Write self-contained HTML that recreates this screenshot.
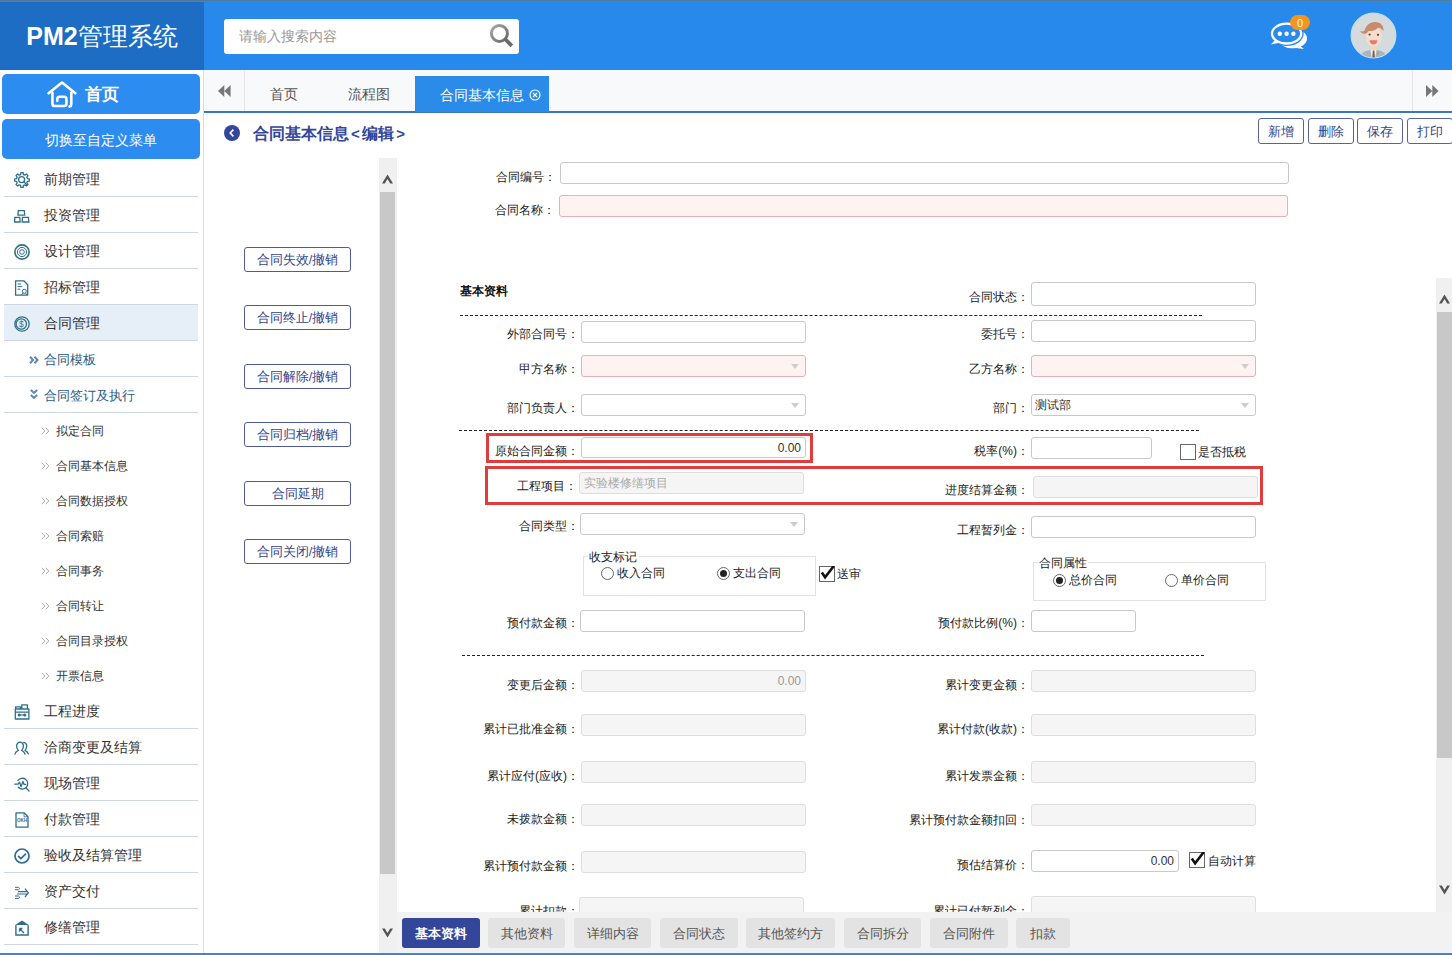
<!DOCTYPE html>
<html><head><meta charset="utf-8">
<style>
*{margin:0;padding:0;box-sizing:border-box}
html,body{width:1452px;height:955px;overflow:hidden;background:#fff;font-family:"Liberation Sans",sans-serif;color:#333}
.a{position:absolute}
#hdr{left:0;top:0;width:1452px;height:70px;background:#2889ec}
#hdrline{left:0;top:0;width:1452px;height:2px;background:linear-gradient(#4f7590,#4a86c0)}
#logo{left:0;top:2px;width:204px;height:68px;background:#1d6dc4;color:#fff;font-size:25px;line-height:68px;text-align:center;white-space:nowrap}
#search{left:224px;top:19px;width:295px;height:35px;background:#fff;border-radius:3px}
#search span{position:absolute;left:15px;top:0;line-height:35px;font-size:14px;color:#999}
#side{left:0;top:70px;width:204px;height:885px;background:#fff;border-right:1px solid #d8dde3}
.sbtn{position:absolute;left:2px;width:198px;background:#2d8cf0;border-radius:5px;color:#fff;text-align:center}
.mi{position:absolute;left:4px;width:194px;height:36px;border-bottom:1px solid #ccd7e1;font-size:14px;color:#333;line-height:36px}
.mi .t{position:absolute;left:40px;top:0}
.mi svg{position:absolute;left:10px;top:11px}
.si{position:absolute;left:0;width:200px;height:35px;font-size:12px;color:#333;line-height:35px}
.si .t{position:absolute;left:56px;top:1px}
.si .r{position:absolute;left:41px;top:14px}
#tabbar{left:204px;top:70px;width:1248px;height:41px;background:#f7f9fa}
#tabline{left:204px;top:111px;width:1248px;height:2px;background:#3b76c0}
.tab{position:absolute;top:0;height:41px;line-height:49px;font-size:14px;color:#555}
.obtn{position:absolute;height:26px;border:1px solid #56649a;border-radius:3px;background:#fff;color:#34448a;font-size:12.5px;text-align:center;line-height:26px}
.lbtn{position:absolute;left:244px;width:107px;height:25px;border:1px solid #4f5b98;border-radius:3px;background:#fff;color:#34448a;font-size:12.5px;text-align:center;line-height:24px}
.lbl{position:absolute;font-size:12px;color:#222;text-align:right;white-space:nowrap}
.inp{position:absolute;height:22px;border:1px solid #c9c9c9;border-radius:3px;background:#fff}
.inp.req{border-color:#e8b0b0;background:#fff2f2}
.inp.dis{background:#f5f5f5;border-color:#dedede}
.dd:after{content:"";position:absolute;right:6px;top:8px;border-left:4.5px solid transparent;border-right:4.5px solid transparent;border-top:5px solid #cdcdcd}
.dash{position:absolute;height:0;border-top:1px dashed #222}
.btab{position:absolute;top:918px;height:30px;background:#e3e3e3;border-radius:3px;color:#555;font-size:12.5px;text-align:center;line-height:32px}
.v{position:absolute;top:0;font-size:12px;line-height:20px;color:#333}
.cb{position:absolute;width:16px;height:16px;border:1px solid #666;background:#fff}

.rd{position:absolute;width:13px;height:13px;border:1px solid #666;border-radius:50%;background:#fff}
.rd.on:after{content:"";position:absolute;left:2px;top:2px;width:7px;height:7px;border-radius:50%;background:#222}
.fs{border:1px solid #e2e2e2}
</style></head><body>
<div id="hdr" class="a"></div>
<div id="hdrline" class="a"></div>
<div class="a" style="left:204px;top:70px;width:1248px;height:1px;background:#4a7ab0"></div>
<div id="logo" class="a"><b>PM2</b>管理系统</div>
<div id="search" class="a"><span>请输入搜索内容</span></div>

<!--HDRICONS-->
<svg class="a" style="left:488px;top:22px" width="28" height="28" viewBox="0 0 28 28"><defs><linearGradient id="mg" x1="0" y1="0" x2="1" y2="1"><stop offset="0" stop-color="#a8a8a8"/><stop offset="1" stop-color="#666"/></linearGradient></defs><circle cx="11.4" cy="11.4" r="8" fill="none" stroke="url(#mg)" stroke-width="3"/><path d="M17 17l6.8 6.8" stroke="#6a6a6a" stroke-width="3.8"/></svg>
<svg class="a" style="left:1266px;top:12px" width="48" height="42" viewBox="0 0 48 42"><ellipse cx="26.5" cy="26.5" rx="14.5" ry="9.8" fill="#fff"/><path d="M33 33l5 4-8-1z" fill="#fff"/><ellipse cx="20.6" cy="21.6" rx="14.6" ry="9.9" fill="#2b8be9" stroke="#2b8be9" stroke-width="5"/><ellipse cx="20.6" cy="21.6" rx="14.6" ry="9.9" fill="#2b8be9" stroke="#fff" stroke-width="2.3"/><path d="M8.5 28.5l-3.5 4 8.5-1.8z" fill="#fff"/><circle cx="13.8" cy="21.8" r="2.2" fill="#fff"/><circle cx="20.6" cy="21.8" r="2.2" fill="#fff"/><circle cx="27.4" cy="21.8" r="2.2" fill="#fff"/><rect x="24" y="3" width="20" height="15" rx="7.5" fill="#f7941d"/><text x="34" y="14.5" font-size="11" font-family="Liberation Sans" fill="#fff" text-anchor="middle">0</text></svg>
<svg class="a" style="left:1350px;top:12px" width="47" height="47" viewBox="0 0 47 47"><defs><clipPath id="cc"><circle cx="23.5" cy="23.5" r="22"/></clipPath></defs><circle cx="23.5" cy="23.5" r="22.3" fill="#d5dadc" stroke="#bfe0f6" stroke-width="1.2"/><g clip-path="url(#cc)"><path d="M10 47c0-6 5-9 13.5-9S37 41 37 47z" fill="#aab5ba"/><path d="M20.5 37.5h6l-1.5 10h-3z" fill="#f4f1ea"/><path d="M22.8 38.5h1.6l.6 9h-2.8z" fill="#7d5a48"/><path d="M27 39l3 2-3 3z" fill="#8fb59a"/><rect x="20.5" y="31" width="6" height="7" fill="#f3d3c2"/><ellipse cx="23.8" cy="25" rx="8" ry="9.8" fill="#f6dccd"/><path d="M14.5 21c0-7 5-11 10.5-11 6 0 9 4 8.5 9-1-1.5-3-3-5.5-3.5-1.5 2-4 3.5-7 3.5-2.5 0-4 .5-5 2z" fill="#c98a6c"/><path d="M17 17c-2 2-4.5 3-7 2 1.5 3 5 3.5 7.5 1.5z" fill="#c98a6c"/><circle cx="19.6" cy="22.5" r="1.1" fill="#5a4036"/><circle cx="28" cy="22.8" r="1.1" fill="#5a4036"/><path d="M19.5 28.3h8c-.5 3-2 4.3-4 4.3s-3.5-1.3-4-4.3z" fill="#e27c68"/></g></svg>
<!--/HDRICONS-->
<div id="side" class="a"></div>
<div class="sbtn" style="top:74px;height:40px;font-size:17px;line-height:40px;text-align:left"><span style="position:absolute;left:83px;top:1px;font-weight:bold">首页</span></div>
<div class="sbtn" style="top:119px;height:40px;font-size:14px;line-height:42px">切换至自定义菜单</div>
<svg class="a" style="left:47px;top:81px" width="30" height="27" viewBox="0 0 30 27"><g fill="none" stroke="#fff" stroke-width="2.6" stroke-linecap="round" stroke-linejoin="round"><path d="M1.6 12.3L15 1.6 28.4 12.3"/><path d="M5.4 11.8V22.4Q5.4 25 8 25H17.2Q19.4 25 19.4 22.8V18Q19.4 15.8 17.2 15.8H12.4Q10.3 15.8 10.3 18V20"/><path d="M24.3 11.8V23.2Q24.3 25 22.6 25.6"/></g></svg>


<!--SIDE-->
<div class="mi" style="top:161px;"><svg width="16" height="16" viewBox="0 0 16 16"><g fill="none" stroke="#2f6f8c" stroke-width="1.3" stroke-linejoin="round"><path d="M6.61 2.58 L6.84 0.69 L9.16 0.69 L9.39 2.58 L10.85 3.18 L12.35 2.01 L13.99 3.65 L12.82 5.15 L13.42 6.61 L15.31 6.84 L15.31 9.16 L13.42 9.39 L12.82 10.85 L13.99 12.35 L12.35 13.99 L10.85 12.82 L9.39 13.42 L9.16 15.31 L6.84 15.31 L6.61 13.42 L5.15 12.82 L3.65 13.99 L2.01 12.35 L3.18 10.85 L2.58 9.39 L0.69 9.16 L0.69 6.84 L2.58 6.61 L3.18 5.15 L2.01 3.65 L3.65 2.01 L5.15 3.18Z"/><circle cx="7.6" cy="7.6" r="3"/><path d="M9.8 9.8l3.6 3.6"/></g></svg><span class="t">前期管理</span></div>
<div class="mi" style="top:197px;"><svg width="16" height="16" viewBox="0 0 16 16"><g fill="none" stroke="#2f6f8c" stroke-width="1.3"><path d="M4.3 2.6h6l.4 4.6H3.9z"/><path d="M.8 9.4h5l.3 4.6H.6z"/><path d="M8.4 9.4h6l.4 4.6H8.2z"/></g></svg><span class="t">投资管理</span></div>
<div class="mi" style="top:233px;"><svg width="16" height="16" viewBox="0 0 16 16"><g fill="none" stroke="#2f6f8c"><circle cx="8" cy="8" r="7.1" stroke-width="1.6"/><circle cx="8" cy="8" r="4.6" stroke-width="1"/><circle cx="8" cy="8" r="2.3" stroke-width="1"/></g></svg><span class="t">设计管理</span></div>
<div class="mi" style="top:269px;"><svg width="16" height="16" viewBox="0 0 16 16"><g fill="none" stroke="#2f6f8c" stroke-width="1.3" stroke-linejoin="round"><path d="M1.6 .8h8.2l3.9 3.9v10.5H1.6z"/><path d="M3.6 4h3.6M3.6 6.6h4.6M3.6 9.2h2.6" stroke-width="1"/><circle cx="10.3" cy="11.3" r="2" stroke-width="1"/><path d="M9 13l-1.5 2M11.6 13l1.5 2" stroke-width="1"/></g></svg><span class="t">招标管理</span></div>
<div class="mi" style="top:305px;background:#e6eef7;"><svg width="16" height="16" viewBox="0 0 16 16"><g fill="none" stroke="#2f6f8c" stroke-width="1.3"><circle cx="8" cy="8" r="7.2"/><circle cx="7.3" cy="8" r="5.2"/></g><text x="7.3" y="11.2" font-size="8.5" font-family="Liberation Sans" text-anchor="middle" fill="#2f6f8c">$</text></svg><span class="t">合同管理</span></div>
<div class="mi" style="top:341px;color:#2c5a86"><svg style="position:absolute;left:25px;top:15px" width="10" height="8" viewBox="0 0 10 8"><path d="M1 .8L4 4 1 7.2M5.5 .8L8.5 4 5.5 7.2" fill="none" stroke="#5b87b5" stroke-width="2"/></svg><span class="t" style="left:40px;font-size:13px;top:1px">合同模板</span></div>
<div class="mi" style="top:377px;color:#2c5a86"><svg style="position:absolute;left:26px;top:12px" width="8" height="11" viewBox="0 0 8 11"><path d="M.8 1L4 4l3.2-3M.8 6L4 9l3.2-3" fill="none" stroke="#5b87b5" stroke-width="2"/></svg><span class="t" style="left:40px;font-size:13px;top:1px">合同签订及执行</span></div>
<div class="si" style="top:413px"><svg class="r" width="9" height="8" viewBox="0 0 9 8"><path d="M.8 .8L3.8 4 .8 7.2M4.8 .8L7.8 4 4.8 7.2" fill="none" stroke="#aaa" stroke-width="1"/></svg><span class="t">拟定合同</span></div>
<div class="si" style="top:448px"><svg class="r" width="9" height="8" viewBox="0 0 9 8"><path d="M.8 .8L3.8 4 .8 7.2M4.8 .8L7.8 4 4.8 7.2" fill="none" stroke="#aaa" stroke-width="1"/></svg><span class="t">合同基本信息</span></div>
<div class="si" style="top:483px"><svg class="r" width="9" height="8" viewBox="0 0 9 8"><path d="M.8 .8L3.8 4 .8 7.2M4.8 .8L7.8 4 4.8 7.2" fill="none" stroke="#aaa" stroke-width="1"/></svg><span class="t">合同数据授权</span></div>
<div class="si" style="top:518px"><svg class="r" width="9" height="8" viewBox="0 0 9 8"><path d="M.8 .8L3.8 4 .8 7.2M4.8 .8L7.8 4 4.8 7.2" fill="none" stroke="#aaa" stroke-width="1"/></svg><span class="t">合同索赔</span></div>
<div class="si" style="top:553px"><svg class="r" width="9" height="8" viewBox="0 0 9 8"><path d="M.8 .8L3.8 4 .8 7.2M4.8 .8L7.8 4 4.8 7.2" fill="none" stroke="#aaa" stroke-width="1"/></svg><span class="t">合同事务</span></div>
<div class="si" style="top:588px"><svg class="r" width="9" height="8" viewBox="0 0 9 8"><path d="M.8 .8L3.8 4 .8 7.2M4.8 .8L7.8 4 4.8 7.2" fill="none" stroke="#aaa" stroke-width="1"/></svg><span class="t">合同转让</span></div>
<div class="si" style="top:623px"><svg class="r" width="9" height="8" viewBox="0 0 9 8"><path d="M.8 .8L3.8 4 .8 7.2M4.8 .8L7.8 4 4.8 7.2" fill="none" stroke="#aaa" stroke-width="1"/></svg><span class="t">合同目录授权</span></div>
<div class="si" style="top:658px"><svg class="r" width="9" height="8" viewBox="0 0 9 8"><path d="M.8 .8L3.8 4 .8 7.2M4.8 .8L7.8 4 4.8 7.2" fill="none" stroke="#aaa" stroke-width="1"/></svg><span class="t">开票信息</span></div>
<div class="mi" style="top:693px;"><svg width="16" height="16" viewBox="0 0 16 16"><g fill="none" stroke="#2f6f8c" stroke-width="1.3" stroke-linejoin="round"><rect x="1.3" y="5" width="13.6" height="10"/><path d="M1.3 8.2h13.6M1.6 5V2.8h5V5M7.8 5V.9h5.6V5"/><path d="M5 11h6" stroke-width="1.1"/><circle cx="5.2" cy="11" r=".9" fill="#2f6f8c"/><circle cx="10.8" cy="11" r=".9" fill="#2f6f8c"/></g></svg><span class="t">工程进度</span></div>
<div class="mi" style="top:729px;"><svg width="16" height="16" viewBox="0 0 16 16"><g fill="none" stroke="#2f6f8c" stroke-width="1.3" stroke-linecap="round"><path d="M1 14c.3-2 2.3-3 3.3-3.6-1.3-1.5-2-3-1.7-5 .4-2 1.8-3.3 3.5-3.3s3 1.3 3.3 3.3c.3 2-.4 3.5-1.7 5 1 .6 2.8 1.5 3.3 3.6"/><path d="M9.7 2.4c1.6.2 2.8 1.4 3 3.2.3 2-.4 3.3-1.6 4.8 1 .6 2.5 1.5 3.2 3.4"/></g></svg><span class="t">洽商变更及结算</span></div>
<div class="mi" style="top:765px;"><svg width="16" height="16" viewBox="0 0 16 16"><g fill="none" stroke="#2f6f8c" stroke-width="1.3" stroke-linecap="round" stroke-linejoin="round"><path d="M4 4.4A5.4 5.4 0 1 1 4.3 11.3"/><path d="M11.8 11.8l3.2 3.2"/><path d="M.8 8.2h3.3l1.4-2 1.6 4.6 1.8-5.4 1.2 3h1.6"/></g></svg><span class="t">现场管理</span></div>
<div class="mi" style="top:801px;"><svg width="16" height="16" viewBox="0 0 16 16"><g fill="none" stroke="#2f6f8c" stroke-width="1.3" stroke-linejoin="round"><path d="M2 .8h8l4 4v10.4H2z"/><path d="M10 .8v4h4" stroke-width=".8"/></g><text x="8" y="10.4" font-size="4.6" font-family="Liberation Sans" font-weight="bold" text-anchor="middle" fill="#2f6f8c">OKH</text></svg><span class="t">付款管理</span></div>
<div class="mi" style="top:837px;"><svg width="16" height="16" viewBox="0 0 16 16"><g fill="none" stroke="#2f6f8c" stroke-width="1.7" stroke-linecap="round" stroke-linejoin="round"><circle cx="8" cy="8" r="7"/><path d="M4.5 8.3l2.4 2.4 4.6-4.6"/></g></svg><span class="t">验收及结算管理</span></div>
<div class="mi" style="top:873px;"><svg width="16" height="16" viewBox="0 0 16 16"><g fill="none" stroke="#2f6f8c" stroke-width="1.2" stroke-linejoin="round"><path d="M4 7.6h9.5M3 10h10.5M11 4.6l3.4 4.2-3.4 4.2"/><path d="M1 3.3h3.5l1.3 1.2-1.3 1.2H1M1 12h3.5l1.3 1.2-1.3 1.2H1" stroke-width="1"/></g></svg><span class="t">资产交付</span></div>
<div class="mi" style="top:909px;"><svg width="16" height="16" viewBox="0 0 16 16"><path d="M8 .5l6.8 4.6H1.2z" fill="#2f6f8c"/><g fill="none" stroke="#2f6f8c" stroke-width="1.4"><path d="M1.9 5v10h12.2V5"/><path d="M5.5 8.5l4.5 4.5M5.5 8.5v3M5.5 8.5h3" stroke-width="1.3"/></g></svg><span class="t">修缮管理</span></div>
<!--/SIDE-->
<div id="tabbar" class="a"></div>
<div id="tabline" class="a"></div>


<!--TABS-->
<div class="a" style="left:204px;top:70px;width:41px;height:41px;border-right:1px solid #e3e6ea"></div>
<svg class="a" style="left:218px;top:85px" width="13" height="12" viewBox="0 0 13 12"><path d="M6.3 0v12L0 6zM12.6 0v12L6.3 6z" fill="#777"/></svg>
<div class="tab" style="left:270px;top:70px">首页</div>
<div class="tab" style="left:348px;top:70px">流程图</div>
<div class="a" style="left:415px;top:76px;width:134px;height:36px;background:#2b8be9;color:#fff;font-size:14px;line-height:38px;padding-left:25px;white-space:nowrap">合同基本信息<svg style="position:absolute;left:114px;top:13px" width="12" height="12" viewBox="0 0 12 12"><circle cx="6" cy="6" r="5" fill="none" stroke="#fff" stroke-width="1.1"/><path d="M4 4l4 4M8 4l-4 4" stroke="#fff" stroke-width="1.1"/></svg></div>
<div class="a" style="left:1412px;top:70px;width:40px;height:41px;border-left:1px solid #e3e6ea"></div>
<svg class="a" style="left:1426px;top:85px" width="13" height="12" viewBox="0 0 13 12"><path d="M0 0v12L6.3 6zM6.3 0v12L12.6 6z" fill="#777"/></svg>
<!--TITLE-->
<svg class="a" style="left:224px;top:125px" width="16" height="16" viewBox="0 0 16 16"><circle cx="8" cy="8" r="8" fill="#34469a"/><path d="M9.4 4.6L6.2 8l3.2 3.4" fill="none" stroke="#fff" stroke-width="1.6"/></svg>
<div class="a" style="left:253px;top:122px;font-size:16px;font-weight:bold;color:#34469a;white-space:nowrap;line-height:24px">合同基本信息<span style="margin:0 2.5px 0 2px;font-size:15px">&lt;</span>编辑<span style="margin-left:2px;font-size:15px">&gt;</span></div>
<div class="obtn" style="left:1258px;top:118px;width:46px">新增</div>
<div class="obtn" style="left:1308px;top:118px;width:46px">删除</div>
<div class="obtn" style="left:1357px;top:118px;width:46px">保存</div>
<div class="obtn" style="left:1407px;top:118px;width:46px">打印</div>
<!--LEFTBTNS-->
<div class="lbtn" style="top:247px">合同失效/撤销</div>
<div class="lbtn" style="top:305px">合同终止/撤销</div>
<div class="lbtn" style="top:364px">合同解除/撤销</div>
<div class="lbtn" style="top:422px">合同归档/撤销</div>
<div class="lbtn" style="top:481px">合同延期</div>
<div class="lbtn" style="top:539px">合同关闭/撤销</div>
<!--LEFT SCROLL-->
<div class="a" style="left:379px;top:158px;width:18px;height:795px;background:#f0f0f0"></div>
<div class="a" style="left:380px;top:192px;width:15px;height:682px;background:#c8c8c8"></div>
<svg class="a" style="left:382px;top:174px" width="11" height="10" viewBox="0 0 11 10"><path d="M0 9.5L5.5 0.5 11 9.5H8.2L5.5 5 2.8 9.5z" fill="#555"/></svg>
<svg class="a" style="left:382px;top:928px" width="11" height="10" viewBox="0 0 11 10"><path d="M0 0.5L5.5 9.5 11 0.5H8.2L5.5 5 2.8 0.5z" fill="#555"/></svg>
<!--RIGHT SCROLL-->
<div class="a" style="left:1436px;top:278px;width:16px;height:634px;background:#f0f0f0"></div>
<div class="a" style="left:1437px;top:312px;width:15px;height:446px;background:#c8c8c8"></div>
<svg class="a" style="left:1439px;top:294px" width="11" height="10" viewBox="0 0 11 10"><path d="M0 9.5L5.5 0.5 11 9.5H8.2L5.5 5 2.8 9.5z" fill="#555"/></svg>
<svg class="a" style="left:1439px;top:885px" width="11" height="10" viewBox="0 0 11 10"><path d="M0 0.5L5.5 9.5 11 0.5H8.2L5.5 5 2.8 0.5z" fill="#555"/></svg>
<!--BOTTOM TABS-->
<div class="a" style="left:397px;top:912px;width:1055px;height:41px;background:#f2f2f2"></div>
<div class="btab" style="left:402px;width:78px;background:#34469a;color:#fff;font-weight:bold">基本资料</div>
<div class="btab" style="left:488px;width:77px">其他资料</div>
<div class="btab" style="left:574px;width:77px">详细内容</div>
<div class="btab" style="left:660px;width:78px">合同状态</div>
<div class="btab" style="left:746px;width:89px">其他签约方</div>
<div class="btab" style="left:844px;width:77px">合同拆分</div>
<div class="btab" style="left:930px;width:78px">合同附件</div>
<div class="btab" style="left:1016px;width:54px">扣款</div>

<!--FORM-->
<div class="a" style="left:397px;top:113px;width:1039px;height:799px;overflow:hidden"><div class="a" style="left:-397px;top:-113px;width:1452px;height:955px">
<div class="lbl" style="right:896px;top:169px;">合同编号：</div>
<div class="inp " style="left:560px;top:162px;width:729px;height:22px"></div>
<div class="lbl" style="right:897px;top:202px;">合同名称：</div>
<div class="inp req" style="left:559px;top:195px;width:729px;height:22px"></div>
<div class="a" style="left:460px;top:283px;font-size:12px;font-weight:bold;color:#111;line-height:16px">基本资料</div>
<div class="lbl" style="right:423px;top:289px;">合同状态：</div>
<div class="inp " style="left:1031px;top:282px;width:225px;height:24px"></div>
<div class="dash" style="left:460px;top:315px;width:742px"></div>
<div class="lbl" style="right:873px;top:326px;">外部合同号：</div>
<div class="inp " style="left:581px;top:321px;width:225px;height:22px"></div>
<div class="lbl" style="right:423px;top:326px;">委托号：</div>
<div class="inp " style="left:1031px;top:320px;width:225px;height:22px"></div>
<div class="lbl" style="right:873px;top:361px;">甲方名称：</div>
<div class="inp req dd" style="left:581px;top:355px;width:225px;height:22px"></div>
<div class="lbl" style="right:423px;top:361px;">乙方名称：</div>
<div class="inp req dd" style="left:1031px;top:355px;width:225px;height:22px"></div>
<div class="lbl" style="right:873px;top:400px;">部门负责人：</div>
<div class="inp dd" style="left:581px;top:394px;width:225px;height:22px"></div>
<div class="lbl" style="right:423px;top:400px;">部门：</div>
<div class="inp dd" style="left:1031px;top:394px;width:225px;height:22px"><span class="v" style="left:3px">测试部</span></div>
<div class="dash" style="left:459px;top:430px;width:740px"></div>
<div class="lbl" style="right:873px;top:443px;">原始合同金额：</div>
<div class="inp " style="left:581px;top:437px;width:225px;height:21px"><span class="v" style="right:4px">0.00</span></div>
<div class="lbl" style="right:423px;top:443px;">税率(%)：</div>
<div class="inp " style="left:1031px;top:437px;width:121px;height:22px"></div>
<div class="cb" style="left:1180px;top:444px"></div><div class="lbl" style="left:1198px;top:444px;text-align:left;line-height:16px">是否抵税</div>
<div class="a" style="left:486px;top:433px;width:327px;height:30px;border:3px solid #e03c3c"></div>
<div class="lbl" style="right:875px;top:478px;">工程项目：</div>
<div class="inp dis" style="left:579px;top:472px;width:225px;height:22px"><span class="v" style="left:4px;color:#aaa">实验楼修缮项目</span></div>
<div class="lbl" style="right:423px;top:482px;">进度结算金额：</div>
<div class="inp dis" style="left:1033px;top:476px;width:225px;height:22px"></div>
<div class="a" style="left:485px;top:466px;width:778px;height:39px;border:3px solid #e03c3c"></div>
<div class="lbl" style="right:873px;top:518px;">合同类型：</div>
<div class="inp dd" style="left:580px;top:513px;width:225px;height:22px"></div>
<div class="lbl" style="right:423px;top:522px;">工程暂列金：</div>
<div class="inp " style="left:1031px;top:516px;width:225px;height:22px"></div>
<div class="a fs" style="left:583px;top:556px;width:233px;height:40px"></div>
<div class="lbl" style="left:588px;top:549px;text-align:left;line-height:16px;background:#fff;padding:0 1px">收支标记</div>
<div class="rd" style="left:601px;top:567px"></div><div class="lbl" style="left:617px;top:565px;text-align:left;line-height:16px">收入合同</div>
<div class="rd on" style="left:717px;top:567px"></div><div class="lbl" style="left:733px;top:565px;text-align:left;line-height:16px">支出合同</div>
<div class="cb on" style="left:819px;top:566px"><svg style="position:absolute;left:0;top:-1px" width="15" height="15" viewBox="0 0 15 15"><path d="M1.8 6.5l3.3 4.8L13.8 0" fill="none" stroke="#111" stroke-width="2.6"/></svg></div><div class="lbl" style="left:837px;top:566px;text-align:left;line-height:16px">送审</div>
<div class="a fs" style="left:1033px;top:562px;width:233px;height:39px"></div>
<div class="lbl" style="left:1038px;top:555px;text-align:left;line-height:16px;background:#fff;padding:0 1px">合同属性</div>
<div class="rd on" style="left:1053px;top:574px"></div><div class="lbl" style="left:1069px;top:572px;text-align:left;line-height:16px">总价合同</div>
<div class="rd" style="left:1165px;top:574px"></div><div class="lbl" style="left:1181px;top:572px;text-align:left;line-height:16px">单价合同</div>
<div class="lbl" style="right:873px;top:615px;">预付款金额：</div>
<div class="inp " style="left:580px;top:610px;width:225px;height:22px"></div>
<div class="lbl" style="right:423px;top:615px;">预付款比例(%)：</div>
<div class="inp " style="left:1031px;top:610px;width:105px;height:22px"></div>
<div class="dash" style="left:462px;top:655px;width:742px"></div>
<div class="lbl" style="right:873px;top:677px;">变更后金额：</div>
<div class="inp dis" style="left:581px;top:670px;width:225px;height:22px"><span class="v" style="right:4px;color:#999">0.00</span></div>
<div class="lbl" style="right:423px;top:677px;">累计变更金额：</div>
<div class="inp dis" style="left:1031px;top:670px;width:225px;height:22px"></div>
<div class="lbl" style="right:873px;top:721px;">累计已批准金额：</div>
<div class="inp dis" style="left:581px;top:714px;width:225px;height:22px"></div>
<div class="lbl" style="right:423px;top:721px;">累计付款(收款)：</div>
<div class="inp dis" style="left:1031px;top:714px;width:225px;height:22px"></div>
<div class="lbl" style="right:873px;top:768px;">累计应付(应收)：</div>
<div class="inp dis" style="left:581px;top:761px;width:225px;height:22px"></div>
<div class="lbl" style="right:423px;top:768px;">累计发票金额：</div>
<div class="inp dis" style="left:1031px;top:761px;width:225px;height:22px"></div>
<div class="lbl" style="right:873px;top:811px;">未拨款金额：</div>
<div class="inp dis" style="left:581px;top:804px;width:225px;height:22px"></div>
<div class="lbl" style="right:423px;top:812px;">累计预付款金额扣回：</div>
<div class="inp dis" style="left:1031px;top:804px;width:225px;height:22px"></div>
<div class="lbl" style="right:873px;top:858px;">累计预付款金额：</div>
<div class="inp dis" style="left:581px;top:851px;width:225px;height:22px"></div>
<div class="lbl" style="right:423px;top:857px;">预估结算价：</div>
<div class="inp " style="left:1031px;top:850px;width:148px;height:22px"><span class="v" style="right:4px">0.00</span></div>
<div class="cb on" style="left:1189px;top:852px"><svg style="position:absolute;left:0;top:-1px" width="15" height="15" viewBox="0 0 15 15"><path d="M1.8 6.5l3.3 4.8L13.8 0" fill="none" stroke="#111" stroke-width="2.6"/></svg></div><div class="lbl" style="left:1208px;top:853px;text-align:left;line-height:16px">自动计算</div>
<div class="lbl" style="right:873px;top:903px;">累计扣款：</div>
<div class="inp dis" style="left:579px;top:897px;width:225px;height:22px"></div>
<div class="lbl" style="right:423px;top:903px;">累计已付暂列金：</div>
<div class="inp dis" style="left:1031px;top:896px;width:225px;height:22px"></div>
</div></div>
<!--/FORM-->
<div class="a" style="left:0;top:953px;width:1452px;height:2px;background:#2b8be9"></div>
</body></html>
